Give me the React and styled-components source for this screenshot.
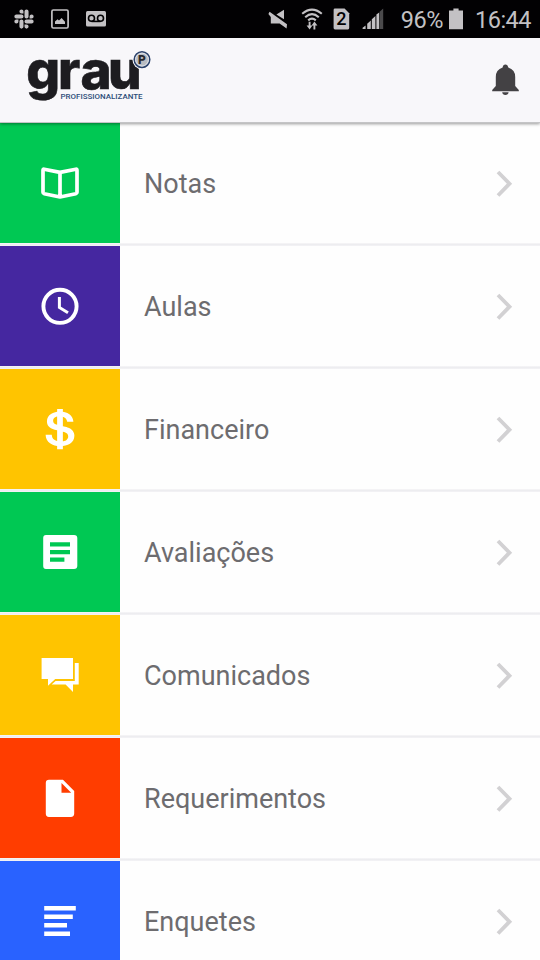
import React from 'react'
import styled, { createGlobalStyle } from 'styled-components'
import { FaSlack } from 'react-icons/fa'
import { IoLogoUsd } from 'react-icons/io'

const GlobalStyle = createGlobalStyle`
  body {
    margin: 0;
    background: #fefefe;
    font-family: Roboto, sans-serif;
  }
`

const Screen = styled.div`
  width: 540px;
  height: 960px;
  overflow: hidden;
  display: flex;
  flex-direction: column;
`

const StatusBar = styled.div`
  flex: none;
  display: flex;
  justify-content: space-between;
  height: 38px;
  box-sizing: border-box;
  padding: 0 9px 0 13px;
  background: #020103;
  color: #c3c1c4;
`

const StatusGroup = styled.div`
  display: flex;
  align-items: center;
`

const StatusText = styled.span`
  width: ${p => p.$width}px;
  font-size: 23.5px;
  letter-spacing: -0.5px;
  line-height: 38px;
  padding-top: 2px;
  box-sizing: border-box;
  text-align: right;
  white-space: nowrap;
`

const Glyph = styled.svg`
  flex: none;
  display: block;
  margin-left: ${p => p.$gap || 0}px;
`

const Header = styled.header`
  flex: none;
  position: relative;
  z-index: 1;
  display: flex;
  justify-content: space-between;
  height: 85px;
  box-sizing: border-box;
  padding: 0 21px 0 24px;
  background: #f8f7fa;
  border-bottom: 1px solid #c4c4c6;
  box-shadow: 0 1px 3px rgba(0, 0, 0, 0.4);
`

const LogoSvg = styled.svg`
  overflow: visible;
`

const Menu = styled.ul`
  flex: 1;
  margin: 0;
  padding: 0;
  list-style: none;
`

const Row = styled.li`
  display: flex;
  align-items: center;
  height: 120px;
  padding-bottom: 3px;
  background: linear-gradient(#f7f6f8, #ededf0 50%, #f4f3f6) bottom / 100% 3px
    no-repeat;
`

const Tile = styled.div`
  flex: none;
  display: flex;
  align-items: center;
  justify-content: center;
  width: 120px;
  height: 120px;
  background: ${p => p.$color};
  color: #fff;
`

const RowBody = styled.div`
  flex: 1;
  display: flex;
  align-items: center;
  justify-content: space-between;
  height: 120px;
  box-sizing: border-box;
  padding: 2px 27px 0 24px;
  background: #fefefe;
`

const Label = styled.span`
  font-size: 27px;
  line-height: 32px;
  color: #6d6c6f;
`

const TileIcon = ({ children }) => (
  <svg width="48" height="48" viewBox="0 0 48 48" fill="currentColor">
    {children}
  </svg>
)

const BookIcon = () => (
  <TileIcon>
    <path
      d="M24 13.4 8.2 10.2Q7 10 7 11.4V33.2Q7 34.4 8.2 34.7L24 38 39.8 34.7Q41 34.4 41 33.2V11.4Q41 10 39.8 10.2ZV38"
      fill="none"
      stroke="currentColor"
      strokeWidth="3.7"
      strokeLinejoin="round"
    />
  </TileIcon>
)

const ClockIcon = () => (
  <TileIcon>
    <g fill="none" stroke="currentColor">
      <circle cx="24" cy="24.3" r="16.6" strokeWidth="3.9" />
      <path d="M23.4 15V25.4L32 30.8" strokeWidth="3" />
    </g>
  </TileIcon>
)

const ArticleIcon = () => (
  <TileIcon>
    <path
      fillRule="evenodd"
      d="M10 7H38Q41.3 7 41.3 10V38Q41.3 41 38 41H10Q7.2 41 7.2 38V10Q7.2 7 10 7ZM14 14.2V18.4H34V14.2ZM14 22V26.2H34V22ZM14 29.6V33.8H28.4V29.6Z"
    />
  </TileIcon>
)

const ChatIcon = () => (
  <TileIcon>
    <path d="M5.6 7H37V28H19.2L12 34.8V28H5.6Z" />
    <path d="M38.8 12H42.7V33.4H37V41L29.6 33.4H15.6L19.6 30H38.8Z" />
  </TileIcon>
)

const FileIcon = () => (
  <TileIcon>
    <path
      fillRule="evenodd"
      d="M13 5.8H27L38.2 17V39.6Q38.2 43 34.8 43H13Q9.8 43 9.8 39.6V9Q9.8 5.8 13 5.8ZM25.5 9V18.7H35.2Z"
    />
  </TileIcon>
)

const LinesIcon = () => (
  <TileIcon>
    <path d="M8.2 9H39.8V13.4H8.2ZM8.2 17.6H36.8V22H8.2ZM8.2 26H31V30.4H8.2ZM8.2 34.6H34V39H8.2Z" />
  </TileIcon>
)

const DollarIcon = () => <IoLogoUsd size={46} />

const Chevron = () => (
  <Glyph width="18" height="28" viewBox="0 0 18 28">
    <path
      d="M3 2 14.5 13.7 3 25.5"
      fill="none"
      stroke="#d2d1d3"
      strokeWidth="3.8"
    />
  </Glyph>
)

const SlackIcon = () => <FaSlack size={22} />

const PictureIcon = () => (
  <Glyph $gap={16} width="18" height="20" viewBox="0 0 18 20">
    <rect
      x="0.9"
      y="1"
      width="16.2"
      height="18"
      rx="1.4"
      fill="none"
      stroke="#c3c1c4"
      strokeWidth="1.7"
    />
    <path d="M4 15V12.6L6.6 10.2 8 11.4 10.6 9 14 12.8V15Z" fill="#c3c1c4" />
  </Glyph>
)

const VoicemailIcon = () => (
  <Glyph $gap={17} width="20" height="16" viewBox="0 0 20 16">
    <rect width="20" height="15.5" rx="1.5" fill="#c3c1c4" />
    <g fill="none" stroke="#020103" strokeWidth="1.6">
      <circle cx="5.5" cy="7.3" r="3" />
      <circle cx="14.5" cy="7.3" r="3" />
      <path d="M5.5 10.4H14.5" />
    </g>
  </Glyph>
)

const MuteIcon = () => (
  <Glyph width="20" height="20" viewBox="0 0 20 20">
    <path
      d="M8.4 5.4 16 0.8V10.2ZM1.6 2.8 19 15.2 18.6 19.4 11.6 14.6H2.8V8L0.4 5Z"
      fill="#c3c1c4"
    />
  </Glyph>
)

const WifiIcon = () => (
  <Glyph $gap={13} width="22" height="22" viewBox="0 0 22 22">
    <g fill="none" stroke="#c3c1c4" strokeWidth="2.1">
      <path d="M1.2 5.8Q11-2.4 20.8 5.8M4.2 9.2Q11 3.2 17.8 9.2M7.2 12.4Q11 9 14.8 12.4" />
      <path d="M8.6 13.8V19M13.4 21.4V16" strokeWidth="1.9" />
    </g>
    <path d="M5.6 17.6H11.4L8.6 21.6ZM10.6 17.6H16.4L13.4 13.4Z" fill="#c3c1c4" />
  </Glyph>
)

const SimIcon = () => (
  <Glyph $gap={10} width="17" height="22" viewBox="0 0 17 22">
    <path
      d="M2 0.6H11.6L16.2 5.2V20Q16.2 21.4 15 21.4H2Q0.6 21.4 0.6 20V2Q0.6 0.6 2 0.6Z"
      fill="#c3c1c4"
    />
    <text
      x="8.4"
      y="17.4"
      textAnchor="middle"
      fontFamily="Roboto, sans-serif"
      fontSize="18"
      fontWeight="500"
      fill="#020103"
    >
      2
    </text>
  </Glyph>
)

const SignalIcon = () => (
  <Glyph $gap={12} width="22" height="22" viewBox="0 0 22 22">
    <path
      d="M0.6 21V19.8L3.6 17.4V21ZM5.2 21V15.8L8.8 12.6V21ZM9.8 21V11.2L13.4 8V21ZM14.4 21V6.6L17.2 4.4V21Z"
      fill="#c3c1c4"
    />
    <path d="M17.6 21V3.8L21.2 0.6V21Z" fill="#4b4a4c" />
  </Glyph>
)

const BatteryIcon = () => (
  <Glyph $gap={6} width="14" height="22" viewBox="0 0 14 22">
    <path d="M0 2.6H4.4V0.6H9.6V2.6H14V21.2H0Z" fill="#c3c1c4" />
  </Glyph>
)

const Logo = () => (
  <LogoSvg width="132" height="84" viewBox="24 38 132 84">
    <text
      x="26.2 58 80.6 108"
      y="89"
      fontFamily="Inter, sans-serif"
      fontSize="53"
      fontWeight="800"
      fill="#1d1c20"
      stroke="#1d1c20"
      strokeWidth="0.6"
    >
      grau
    </text>
    <text
      x="60.5"
      y="98.5"
      textLength="82"
      lengthAdjust="spacingAndGlyphs"
      fontFamily="Roboto, sans-serif"
      fontSize="8"
      fontWeight="500"
      fill="#2c4c78"
    >
      PROFISSIONALIZANTE
    </text>
    <circle cx="142" cy="59.6" r="9.6" fill="#f8f7fa" />
    <circle
      cx="142"
      cy="59.6"
      r="7.8"
      fill="#b9bcc2"
      stroke="#2b426c"
      strokeWidth="1.5"
    />
    <circle
      cx="142"
      cy="59.6"
      r="6.4"
      fill="none"
      stroke="#dfe3ea"
      strokeWidth="1"
    />
    <text
      x="142"
      y="63.8"
      textAnchor="middle"
      fontFamily="Roboto, sans-serif"
      fontSize="12"
      fontWeight="900"
      fill="#28282c"
    >
      P
    </text>
  </LogoSvg>
)

const Bell = () => (
  <svg width="27" height="84" viewBox="492 38 27 84" fill="#434144">
    <path d="M505.4 64.6Q507.8 64.6 508.2 67.6Q515.2 69.8 515.2 77V86L518.8 90V91.2H492.2V90L495.8 86V77Q495.8 69.8 502.6 67.6Q503 64.6 505.4 64.6Z" />
    <path d="M502.2 92.3H508.6Q508.2 95 505.4 95Q502.6 95 502.2 92.3Z" />
  </svg>
)

const items = [
  { name: 'Notas', color: '#00c853', icon: BookIcon },
  { name: 'Aulas', color: '#4527a0', icon: ClockIcon },
  { name: 'Financeiro', color: '#ffc400', icon: DollarIcon },
  { name: 'Avaliações', color: '#00c853', icon: ArticleIcon },
  { name: 'Comunicados', color: '#ffc400', icon: ChatIcon },
  { name: 'Requerimentos', color: '#ff3d00', icon: FileIcon },
  { name: 'Enquetes', color: '#2962ff', icon: LinesIcon },
]

const MenuRow = ({ name, color, icon: Icon }) => (
  <Row>
    <Tile $color={color}>
      <Icon />
    </Tile>
    <RowBody>
      <Label>{name}</Label>
      <Chevron />
    </RowBody>
  </Row>
)

const App = () => (
  <Screen>
    <GlobalStyle />
    <StatusBar>
      <StatusGroup>
        <SlackIcon />
        <PictureIcon />
        <VoicemailIcon />
      </StatusGroup>
      <StatusGroup>
        <MuteIcon />
        <WifiIcon />
        <SimIcon />
        <SignalIcon />
        <StatusText $width={59}>96%</StatusText>
        <BatteryIcon />
        <StatusText $width={68}>16:44</StatusText>
      </StatusGroup>
    </StatusBar>
    <Header>
      <Logo />
      <Bell />
    </Header>
    <Menu>
      {items.map(item => (
        <MenuRow key={item.name} {...item} />
      ))}
    </Menu>
  </Screen>
)

export default App
